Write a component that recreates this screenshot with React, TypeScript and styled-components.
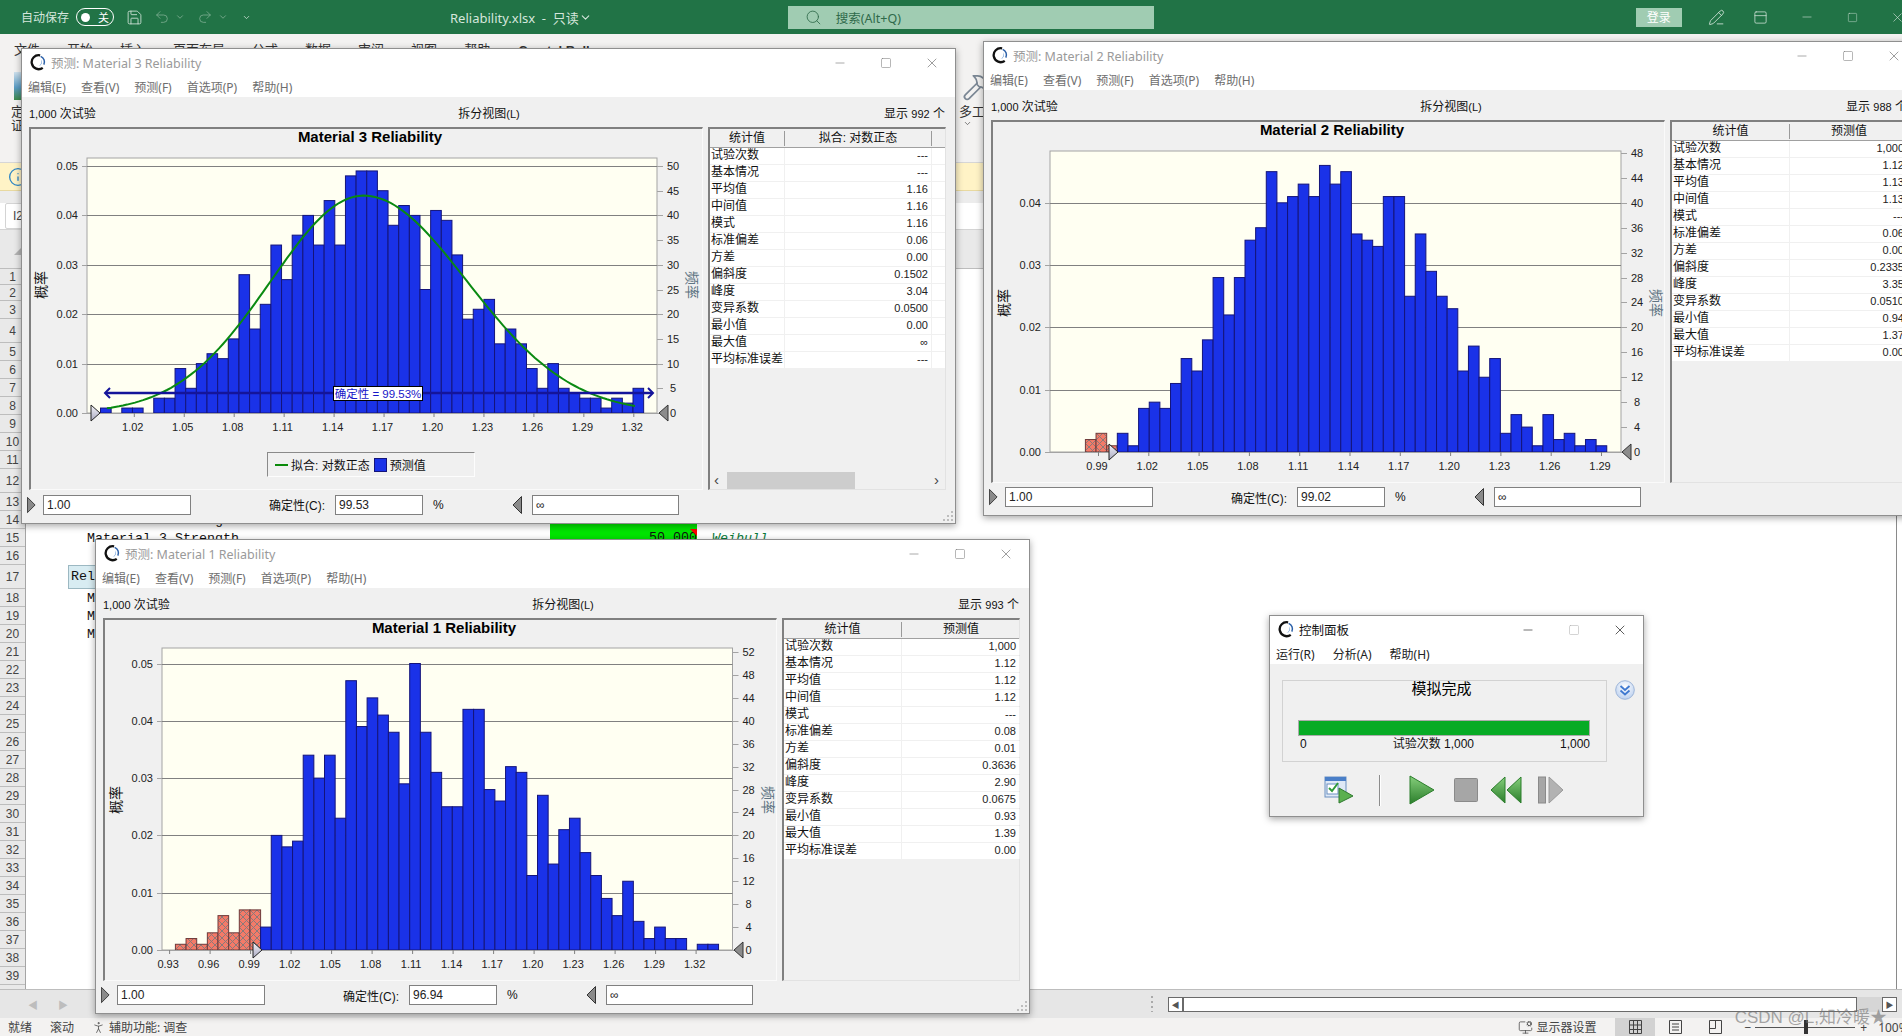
import React from 'react';
import styled, { createGlobalStyle } from 'styled-components';
import { Save, Undo2, Redo2, Search, ChevronDown, PencilLine, PanelTop, Minus, Square, X, Hammer, PersonStanding, MonitorCog, Info } from 'lucide-react';

const UI = '"Liberation Sans", "Noto Sans CJK SC", sans-serif';
const TITLE = '"Noto Sans", "Noto Sans CJK SC", sans-serif';
const MONO = '"Liberation Mono", monospace';

const Global = createGlobalStyle`
  html, body { margin: 0; padding: 0; background: #fff; overflow: hidden; }
  body { font-family: ${UI}; font-size: 12px; color: #111; }
  * { box-sizing: border-box; }
`;

const Page = styled.div`
  position: relative; width: 1902px; height: 1036px; overflow: hidden;
  display: flex; flex-direction: column; background: #fff;
`;

/* ---------- Excel shell ---------- */
const ExcelTitle = styled.header`
  height: 34px; background: #217346; display: flex; align-items: center; flex: none;
  color: #cfe3d7; font-family: ${TITLE}; font-size: 12px; overflow: hidden;
`;
const TitleItem = styled.span<{ $ml: number; $dim?: boolean }>`
  margin-left: ${p => p.$ml}px; display: inline-flex; align-items: center; flex: none;
  color: ${p => (p.$dim ? '#7fae93' : '#d5e6dc')};
`;
const DocName = styled(TitleItem)`
  font-size: 13px;
`;
const Toggle = styled.span`
  margin-left: 7px; width: 38px; height: 18px; border: 1.5px solid #fff; border-radius: 9px; flex: none;
  display: flex; align-items: center; justify-content: space-between; padding: 0 4px 0 4px;
  color: #fff; font-size: 11px;
  &::before { content: ''; width: 9px; height: 9px; border-radius: 50%; background: #fff; }
`;
const SearchBox = styled.div`
  margin-left: 196px; width: 366px; height: 23px; background: #a0ccb2; flex: none;
  display: flex; align-items: center; padding-left: 17px; gap: 14px; color: #2f6a4a; font-size: 12.5px;
`;
const Login = styled.div`
  margin-left: 482px; width: 46px; height: 19px; background: #a0ccb2; color: #fff; flex: none;
  display: flex; align-items: center; justify-content: center; font-size: 12px;
`;

const Ribbon = styled.section`
  height: 129px; flex: none; background: #f3f2f1; border-bottom: 1px solid #d6d6d6;
  display: flex; flex-direction: column; overflow: hidden;
`;
const TabRow = styled.nav`
  height: 24px; display: flex; align-items: flex-end; padding-left: 14px; gap: 27px;
  font-family: ${TITLE}; font-size: 13px; color: #333;
`;
const TabBold = styled.b`
  font-family: ${UI}; font-size: 13px; margin-left: 1px;
`;
const RibbonBody = styled.div`
  display: grid; grid-template-columns: 948px 1fr; padding: 14px 0 0 11px; flex: 1;
`;
const RibbonTool = styled.div`
  display: flex; flex-direction: column; align-items: flex-start; font-size: 13px; line-height: 14px; color: #333;
`;
const ToolArt = styled.div<{ $paint?: boolean }>`
  width: 30px; height: 28px; margin-left: 3px; margin-bottom: 5px; color: #7b8794;
  background: ${p => (p.$paint ? 'linear-gradient(to bottom, #cfe2ee 0%, #5b9cc4 55%, #3d8a4a 100%)' : 'transparent')};
`;
const ToolChev = styled.div`
  margin-left: 4px; color: #555; line-height: 10px;
`;
const YellowBar = styled.div`
  height: 28px; flex: none; background: #fff3c6; padding: 4px 0 0 8px; color: #2f86c5;
  border-bottom: 1px solid #e8d9a0;
`;
const BandGap = styled.div`
  height: 12px; flex: none; background: #ececec;
`;
const FormulaBar = styled.div`
  height: 27px; flex: none; background: #fff; border-bottom: 1px solid #d4d4d4; padding-left: 5px;
`;
const NameBox = styled.div`
  width: 80px; height: 26px; background: #fff; border: 1px solid #d4d4d4; border-radius: 2px;
  padding: 5px 0 0 7px; color: #444;
`;
const ColHeader = styled.div`
  height: 39px; flex: none; background: #e9e9e9; border-bottom: 1px solid #bdbdbd; padding: 16px 0 0 14px;
`;
const Corner = styled.div`
  width: 0; height: 0; border-left: 9px solid transparent; border-bottom: 9px solid #b4b4b4;
`;

const Sheet = styled.main`
  flex: 1; min-height: 0; display: flex; overflow: hidden; background: #fff; border-bottom: 1px solid #bdbdbd;
`;
const RowHeads = styled.div`
  width: 26px; flex: none; background: #e9e9e9; border-right: 1px solid #a5a5a5;
`;
const RowHead = styled.div<{ $h: number }>`
  height: ${p => p.$h}px; border-bottom: 1px solid #bdbdbd; color: #444; font-size: 12px;
  display: flex; align-items: center; justify-content: center;
`;
const SheetCells = styled.div`
  flex: 1; min-width: 0; border-right: 1px solid #8a8a8a; margin-right: 5px;
  font-family: ${MONO}; font-size: 13.33px;
`;
const SheetRow = styled.div<{ $h: number }>`
  height: ${p => p.$h}px; display: grid; grid-template-columns: 42px 19px 463px 147px 1fr; align-items: center;
`;
const NameCell = styled.div`
  grid-column: 3; white-space: nowrap;
`;
const GreenCell = styled.div`
  grid-column: 4; background: #00e600; height: 100%; text-align: right; position: relative; padding-top: 1px;
  &::after { content: ''; position: absolute; top: 0; right: 0; border-top: 7px solid #f00; border-left: 7px solid transparent; }
`;
const DistCell = styled.div`
  grid-column: 5; padding-left: 15px; color: #0a7a3a; font-style: italic;
`;
const SectionCell = styled.div`
  grid-column: 2 / 4; width: 110px; height: 24px; background: #d8ecf2; border: 1px solid #9cb8c2;
  padding: 3px 0 0 2px; white-space: nowrap;
`;

const ScrollRow = styled.div`
  height: 28px; flex: none; background: #e6e6e6; display: flex; align-items: center; color: #bdbdbd; font-size: 10px;
`;
const SheetArrow = styled.span<{ $ml: number }>`
  margin-left: ${p => p.$ml}px; flex: none;
`;
const Grip = styled.span`
  margin-left: 1083px; width: 2px; height: 16px; flex: none;
  background: repeating-linear-gradient(to bottom, #aaa 0 2px, transparent 2px 5px);
`;
const HScroll = styled.div`
  margin-left: 15px; width: 729px; height: 15px; flex: none; display: flex; background: #d6d6d6; color: #555;
`;
const HBtn = styled.div`
  width: 15px; background: #fff; border: 1px solid #6a6a6a; display: flex; align-items: center; justify-content: center;
  font-size: 8px; color: #555; flex: none;
`;
const HTrack = styled.div`
  width: 674px; background: #fff; border: 1px solid #6a6a6a; border-left-width: 1px; flex: none;
`;
const HFill = styled.div`
  flex: 1;
`;

const StatusBar = styled.footer`
  height: 18px; flex: none; background: #f3f2f1; display: flex; align-items: center; font-family: ${TITLE};
  font-size: 12px; color: #444; overflow: hidden; white-space: nowrap;
`;
const StatusText = styled.span<{ $ml: number }>`
  margin-left: ${p => p.$ml}px; display: inline-flex; align-items: center; gap: 3px; flex: none;
`;
const ViewBtn = styled.span<{ $on?: boolean; $ml?: number }>`
  margin-left: ${p => p.$ml ?? 0}px; width: 40px; height: 18px; flex: none; display: flex; align-items: center; justify-content: center;
  background: ${p => (p.$on ? '#d2d2d2' : 'transparent')}; color: #444;
`;
const Zoomer = styled.span`
  position: relative; margin-left: 4px; width: 100px; height: 1px; background: #555; flex: none;
`;
const ZoomThumb = styled.span`
  position: absolute; left: 49px; top: -7px; width: 4px; height: 14px; background: #333;
`;
const Watermark = styled.div`
  position: absolute; right: 15px; bottom: 8px; font-family: ${UI}; font-size: 17px; color: rgba(110,110,110,.6);
  z-index: 9;
`;

/* ---------- Floating windows ---------- */
const Win = styled.section<{ $x: number; $y: number; $w: number; $h: number }>`
  position: absolute; left: ${p => p.$x}px; top: ${p => p.$y}px; width: ${p => p.$w}px; height: ${p => p.$h}px;
  background: #f0f0f0; border: 1px solid #8f8f8f; box-shadow: 0 2px 7px rgba(0,0,0,.35);
  display: flex; flex-direction: column; font-family: ${UI}; font-size: 12px; color: #111;
`;
const WinHead = styled.div`
  height: 48px; background: #fff; flex: none; display: flex; flex-direction: column;
`;
const WinTitleBar = styled.div<{ $active?: boolean }>`
  height: 26px; display: flex; align-items: center; padding-left: 7px; gap: 4px;
  font-family: ${TITLE}; font-size: 12.5px; color: ${p => (p.$active ? '#111' : '#9a9a9a')};
`;
const WinControls = styled.div<{ $active?: boolean }>`
  margin-left: auto; display: flex; color: ${p => (p.$active ? '#222' : '#7a7a7a')};
`;
const WinBtn = styled.span<{ $off?: boolean }>`
  width: 46px; height: 26px; padding-top: 2px; display: flex; align-items: center; justify-content: center;
  opacity: ${p => (p.$off ? 0.35 : 1)};
`;
const Menu = styled.div<{ $active?: boolean; $gap: number }>`
  height: 22px; padding: 2px 0 0 6px; display: flex; align-items: center; gap: ${p => p.$gap}px;
  font-family: ${TITLE}; font-size: 12px; color: ${p => (p.$active ? '#222' : '#6e6e6e')};
`;
const InfoRow = styled.div`
  height: 30px; flex: none; display: grid; grid-template-columns: 1fr auto 1fr; align-items: center;
  padding: 0 10px 0 7px;
`;
const InfoCenter = styled.span`
  margin-left: 4px;
`;
const InfoRight = styled.span`
  justify-self: end;
`;
const Num = styled.span`
  font-size: 11px;
`;
const Body = styled.div`
  height: 363px; flex: none; display: flex; gap: 5px; padding-left: 7px;
`;
const ChartPanel = styled.div`
  width: 674px; height: 363px; flex: none; display: flex; flex-direction: column;
  border-top: 2px solid #808080; border-left: 2px solid #808080; border-right: 1px solid #fafafa; border-bottom: 1px solid #fafafa;
`;
const ChartTitle = styled.div`
  height: 22px; padding-left: 7px; flex: none; text-align: center; line-height: 16px; font-weight: 700; font-size: 15px; color: #000;
`;
const ChartSvg = styled.svg`
  display: block; flex: none; font-family: ${UI};
`;
const Legend = styled.div`
  margin-left: 236px; width: 208px; height: 25px; display: flex; align-items: center; flex: none;
  border: 1px solid #fdfdfd; border-top-color: #8a8a8a; border-left-color: #8a8a8a; padding-left: 7px;
`;
const LegendLine = styled.span`
  width: 13px; height: 2px; background: #0a8a0a; margin-right: 3px;
`;
const LegendSwatch = styled.span`
  width: 13px; height: 14px; background: #1a32e8; border: 1px solid #14147a; margin: 0 3px 0 4px;
`;

const StatsPanel = styled.div`
  width: 238px; flex: none; display: flex; flex-direction: column; height: 363px;
  border-top: 2px solid #808080; border-left: 2px solid #808080; border-right: 1px solid #e2e2e2; border-bottom: 1px solid #e2e2e2;
`;
const StatsHead = styled.div<{ $c1: number; $c2: number }>`
  height: 19px; flex: none; display: grid; grid-template-columns: ${p => p.$c1}px ${p => p.$c2}px 1fr; align-items: center;
  border-bottom: 1px solid #a0a0a0; background: #f0f0f0;
`;
const StatsHeadCell = styled.div<{ $div?: boolean }>`
  text-align: center; height: 15px; line-height: 15px; border-right: ${p => (p.$div ? '1px solid #9a9a9a' : 'none')};
`;
const StatRow = styled.div<{ $c1: number; $c2: number }>`
  height: 17px; flex: none; display: grid; grid-template-columns: ${p => p.$c1}px ${p => p.$c2}px 1fr; background: #fff;
  border-bottom: 1px solid #f0f0f0; line-height: 15px;
`;
const StatName = styled.div`
  padding-left: 1px; border-right: 1px solid #f0f0f0; white-space: nowrap; overflow: hidden;
`;
const StatValue = styled.div`
  text-align: right; padding-right: 3px; font-size: 11px; color: #222; border-right: 1px solid #f0f0f0;
`;
const StatSpacer = styled.div`
  flex: 1;
`;
const StatScroll = styled.div`
  height: 17px; flex: none; display: flex; align-items: center; background: #f0f0f0; color: #444; font-size: 15px; padding: 0 6px 2px 4px;
`;
const StatThumb = styled.div`
  margin: 2px 0 0 8px; width: 128px; height: 17px; background: #cdcdcd;
`;
const ArrowEnd = styled.span`
  margin-left: auto;
`;

const BottomRow = styled.div`
  flex: 1; display: flex; align-items: center; padding: 0 0 4px 5px; position: relative;
`;
const ValueBox = styled.div<{ $ml: number; $w: number }>`
  margin-left: ${p => p.$ml}px; width: ${p => p.$w}px; height: 20px; flex: none; background: #fff;
  border: 1px solid #808080; padding: 0 3px; line-height: 18px; color: #222;
`;
const FieldLabel = styled.span<{ $ml: number; $w: number }>`
  margin-left: ${p => p.$ml}px; width: ${p => p.$w}px; flex: none; white-space: nowrap;
`;
const GripCorner = styled.svg`
  position: absolute; right: 2px; bottom: 2px;
`;
const TriWrap = styled.svg<{ $ml?: number }>`
  margin-left: ${p => p.$ml ?? 0}px; flex: none; display: block;
`;

/* control panel */
const CpBody = styled.div`
  flex: 1; display: flex; flex-direction: column; padding: 16px 0 0 12px;
`;
const CpTop = styled.div`
  display: flex; align-items: flex-start;
`;
const CpGroup = styled.div`
  width: 325px; height: 82px; border: 1px solid #d2d2d2; padding: 0 16px 0 15px;
`;
const CpStatus = styled.div`
  text-align: center; font-size: 15px; line-height: 14px; height: 39px; color: #000; padding-right: 5px;
  font-family: "Noto Sans CJK SC", sans-serif;
`;
const Progress = styled.div`
  height: 16px; background: #07ab25; border: 1px solid #ababab;
`;
const ProgressLabels = styled.div`
  display: flex; justify-content: space-between; line-height: 14px; margin-top: 1px; padding: 0 0 0 2px;
`;
const CpChevron = styled.svg`
  margin: 0 0 0 8px; flex: none;
`;
const CpToolbar = styled.div`
  display: flex; align-items: center; height: 34px; margin-top: 11px;
`;
const CpIcon = styled.svg<{ $ml: number }>`
  margin-left: ${p => p.$ml}px; flex: none; display: block;
`;
const CpDivider = styled.span<{ $ml: number }>`
  margin-left: ${p => p.$ml}px; width: 2px; height: 31px; background: #8c8c8c; border-right: 1px solid #fff; flex: none;
`;

/* ---------- pieces ---------- */
const Logo = () => (
  <svg width="18" height="18" viewBox="0 0 17 17" style={{ flex: 'none' }}>
    <path d="M10.5 2.2A6.6 6.6 0 1 0 13 14" fill="none" stroke="#111" strokeWidth="2.2" />
    <path d="M11 3.2A5.7 5.7 0 0 1 14 11" fill="none" stroke="#2a5fa8" strokeWidth="1.4" />
    <path d="M11.5 6a4 4 0 0 1-2.5 6.3A5 5 0 0 0 11.5 6z" fill="#5a8fd0" />
  </svg>
);

const Controls = ({ active, off }: { active?: boolean; off?: boolean }) => (
  <WinControls $active={active}>
    <WinBtn><Minus size={14} strokeWidth={1.1} /></WinBtn>
    <WinBtn $off={off}><Square size={12} strokeWidth={1.1} /></WinBtn>
    <WinBtn><X size={16} strokeWidth={1.1} /></WinBtn>
  </WinControls>
);

type ChartCfg = {
  x0: number; x1: number; top: number; bottom: number; per: number;
  barStart: number; barW: number; counts: number[]; red: number;
  tick0: number; tickStep: number; xLabels: string[];
  leftMax: number; rightMax: number; rightStep: number;
  leftMarker: number; rightMarker: number; height: number;
  curve?: boolean; certainty?: string; yTitle: number;
};

const VB_X = 9, VB_Y = 103, VB_W = 671;

function lognCurve(c: ChartCfg) {
  const pts: string[] = [];
  for (let x = c.x0 + 20; x <= 616; x += 4) {
    const center = 341.4;
    const s = x < center ? 92.7 : 103.6;
    const v = Math.exp(-((x - center) ** 2) / (2 * s * s)) * 44 * c.per;
    pts.push(`${x},${(c.bottom - v).toFixed(1)}`);
  }
  return pts.join(' ');
}

const Chart = ({ id, c }: { id: string; c: ChartCfg }) => {
  const left: number[] = [];
  for (let i = 0; i <= c.leftMax; i++) left.push(i);
  const right: number[] = [];
  for (let i = 0; i <= c.rightMax; i += c.rightStep) right.push(i);
  const ly = (n: number) => c.bottom - n * 10 * c.per;
  return (
    <ChartSvg width={VB_W} height={c.height} viewBox={`${VB_X} ${VB_Y} ${VB_W} ${c.height}`}>
      <defs>
        <pattern id={`hatch-${id}`} width="7" height="7" patternUnits="userSpaceOnUse">
          <rect width="7" height="7" fill="#f47a68" />
          <path d="M0 0L7 7M7 0L0 7" stroke="#8a7a7a" strokeWidth="1" />
        </pattern>
        <linearGradient id={`mark-${id}`} x1="0" y1="0" x2="0" y2="1">
          <stop offset="0" stopColor="#f4f4fa" />
          <stop offset="1" stopColor="#a8a8c0" />
        </linearGradient>
      </defs>
      <rect x={c.x0} y={c.top} width={c.x1 - c.x0} height={c.bottom - c.top} fill="#fffff2" stroke="#a3a3a3" />
      {left.map(n => (
        <g key={n}>
          {n > 0 && <line x1={c.x0} x2={c.x1} y1={Math.round(ly(n)) + 0.5} y2={Math.round(ly(n)) + 0.5} stroke="#808080" />}
          <line x1={c.x0 - 5} x2={c.x0} y1={Math.round(ly(n)) + 0.5} y2={Math.round(ly(n)) + 0.5} stroke="#a3a3a3" />
          <text x={c.x0 - 9} y={ly(n) + 4} textAnchor="end" fontSize="11" fill="#222">{`0.0${n}`}</text>
        </g>
      ))}
      {right.map(n => {
        const y = c.bottom - n * c.per;
        return (
          <g key={n}>
            <line x1={c.x1} x2={c.x1 + 6} y1={Math.round(y) + 0.5} y2={Math.round(y) + 0.5} stroke="#a3a3a3" />
            <text x={c.x1 + 16} y={y + 4} textAnchor="middle" fontSize="11" fill="#222">{n}</text>
          </g>
        );
      })}
      {c.counts.map((n, i) =>
        n === 0 ? null : (
          <rect
            key={i}
            x={c.barStart + i * c.barW}
            y={c.bottom - n * c.per}
            width={c.barW}
            height={n * c.per}
            fill={i < c.red ? `url(#hatch-${id})` : '#1a32e8'}
            stroke={i < c.red ? '#6e3a3a' : '#14147a'}
            strokeWidth="1"
          />
        )
      )}
      <line x1={c.x0} x2={c.x1} y1={c.bottom + 0.5} y2={c.bottom + 0.5} stroke="#a3a3a3" />
      {c.xLabels.map((l, i) => {
        const x = c.tick0 + i * c.tickStep;
        return (
          <g key={l}>
            <line x1={x} x2={x} y1={c.bottom} y2={c.bottom + 4} stroke="#808080" />
            <text x={x - 1.5} y={c.bottom + 18} textAnchor="middle" fontSize="11" fill="#222">{l}</text>
          </g>
        );
      })}
      {c.curve && <polyline points={lognCurve(c)} fill="none" stroke="#0a8a12" strokeWidth="2" />}
      {c.certainty && (
        <g>
          <line x1={84} x2={630} y1={345} y2={345} stroke="#14149a" strokeWidth="2.5" />
          <path d="M88 340L83 345L88 350M626 340L631 345L626 350" fill="none" stroke="#14149a" strokeWidth="2" />
          <rect x={311.5} y={338.5} width={89} height={14} fill="#fff" stroke="#000" />
          <text x={356} y={350} textAnchor="middle" fontSize="11.5" fill="#1616c8">{c.certainty}</text>
        </g>
      )}
      <polygon
        points={`${c.leftMarker},${c.bottom - 8} ${c.leftMarker + 9},${c.bottom} ${c.leftMarker},${c.bottom + 8}`}
        fill={`url(#mark-${id})`}
        stroke="#222"
      />
      <polygon
        points={`${c.rightMarker + 9},${c.bottom - 8} ${c.rightMarker},${c.bottom} ${c.rightMarker + 9},${c.bottom + 8}`}
        fill="#8c8c8c"
        stroke="#333"
      />
      <text transform={`translate(${c.x0 - 41},${c.yTitle}) rotate(-90)`} textAnchor="middle" fontSize="14" fill="#111">概率</text>
      <text transform={`translate(${c.x1 + 30},${c.yTitle}) rotate(90)`} textAnchor="middle" fontSize="14" fill="#5f7583">频率</text>
    </ChartSvg>
  );
};

const Tri = ({ dir, ml }: { dir: 'r' | 'l'; ml?: number }) => (
  <TriWrap $ml={ml} width={dir === 'r' ? 9 : 10} height={18} viewBox="0 0 10 18">
    <polygon points={dir === 'r' ? '0.5,0.5 9,9 0.5,17.5' : '9.5,0.5 1,9 9.5,17.5'} fill="#8a8a8a" stroke="#333" />
  </TriWrap>
);

type StatProps = { c1: number; c2: number; head2: string; values: string[]; scroll?: boolean };
const STAT_NAMES = ['试验次数', '基本情况', '平均值', '中间值', '模式', '标准偏差', '方差', '偏斜度', '峰度', '变异系数', '最小值', '最大值', '平均标准误差'];

const Stats = ({ c1, c2, head2, values, scroll }: StatProps) => (
  <StatsPanel>
    <StatsHead $c1={c1} $c2={c2}>
      <StatsHeadCell $div>统计值</StatsHeadCell>
      <StatsHeadCell $div={c2 > 120}>{head2}</StatsHeadCell>
      <span />
    </StatsHead>
    {STAT_NAMES.map((n, i) => (
      <StatRow key={n} $c1={c1} $c2={c2}>
        <StatName>{n}</StatName>
        <StatValue>{values[i]}</StatValue>
        <span />
      </StatRow>
    ))}
    <StatSpacer />
    {scroll && (
      <StatScroll>
        <span>‹</span>
        <StatThumb />
        <ArrowEnd>›</ArrowEnd>
      </StatScroll>
    )}
  </StatsPanel>
);

const Forecast = ({
  id, x, y, h, name, shown, cert, chart, stats,
}: {
  id: string; x: number; y: number; h: number; name: string; shown: string; cert: string; chart: ChartCfg; stats: StatProps;
}) => (
  <Win $x={x} $y={y} $w={935} $h={h}>
    <WinHead>
      <WinTitleBar>
        <Logo />
        <span>预测: {name}</span>
        <Controls />
      </WinTitleBar>
      <Menu $gap={15}>
        <span>编辑(E)</span><span>查看(V)</span><span>预测(F)</span><span>首选项(P)</span><span>帮助(H)</span>
      </Menu>
    </WinHead>
    <InfoRow>
      <span><Num>1,000</Num> 次试验</span>
      <InfoCenter>拆分视图<Num>(L)</Num></InfoCenter>
      <InfoRight>显示 <Num>{shown}</Num> 个</InfoRight>
    </InfoRow>
    <Body>
      <ChartPanel>
        <ChartTitle>{name}</ChartTitle>
        <Chart id={id} c={chart} />
        {chart.curve && (
          <Legend>
            <LegendLine /><span>拟合: 对数正态</span>
            <LegendSwatch /><span>预测值</span>
          </Legend>
        )}
      </ChartPanel>
      <Stats {...stats} />
    </Body>
    <BottomRow>
      <Tri dir="r" />
      <ValueBox $ml={7} $w={148}>1.00</ValueBox>
      <FieldLabel $ml={78} $w={57}>确定性(C):</FieldLabel>
      <ValueBox $ml={9} $w={88}>{cert}</ValueBox>
      <FieldLabel $ml={10} $w={8}>%</FieldLabel>
      <Tri dir="l" ml={71} />
      <ValueBox $ml={10} $w={147}>∞</ValueBox>
      <GripCorner width="11" height="11" viewBox="0 0 11 11">
        {[[9, 1], [9, 5], [9, 9], [5, 5], [5, 9], [1, 9]].map(([a, b]) => (
          <rect key={`${a}-${b}`} x={a} y={b} width="2" height="2" fill="#bdbdbd" />
        ))}
      </GripCorner>
    </BottomRow>
  </Win>
);

const c3: ChartCfg = {
  x0: 65, x1: 635, top: 110, bottom: 365, per: 4.94, barStart: 78.5, barW: 10.65,
  counts: [1,0,1,1,0,3,3,9,5,10,12,11,15,28,17,22,34,27,36,40,34,43,34,48,49,49,45,38,42,40,25,41,39,32,19,21,23,14,17,14,9,5,10,5,4,3,3,1,3,2,5],
  red: 0, tick0: 112.3, tickStep: 49.95,
  xLabels: ['1.02','1.05','1.08','1.11','1.14','1.17','1.20','1.23','1.26','1.29','1.32'],
  leftMax: 5, rightMax: 50, rightStep: 5, leftMarker: 69, rightMarker: 637, height: 301,
  curve: true, certainty: '确定性 = 99.53%', yTitle: 237,
};
const c2: ChartCfg = {
  x0: 66, x1: 637, top: 110, bottom: 411, per: 6.23, barStart: 101.4, barW: 10.64,
  counts: [2,3,1,3,1,7,8,7,11,15,13,18,28,22,28,34,36,45,40,41,43,41,46,43,45,35,34,33,41,41,25,35,29,25,23,13,17,12,15,3,6,4,1,6,2,3,1,2,1],
  red: 3, tick0: 114.5, tickStep: 50.3,
  xLabels: ['0.99','1.02','1.05','1.08','1.11','1.14','1.17','1.20','1.23','1.26','1.29'],
  leftMax: 4, rightMax: 48, rightStep: 4, leftMarker: 125, rightMarker: 638, height: 338, yTitle: 262,
};
const c1: ChartCfg = {
  x0: 66, x1: 636.5, top: 109, bottom: 411, per: 5.73, barStart: 79.4, barW: 10.65,
  counts: [1,2,1,3,6,3,7,7,4,20,18,19,34,30,34,23,47,39,44,41,38,29,50,38,31,25,25,42,42,28,26,32,31,13,27,15,21,23,17,13,9,6,12,5,2,4,2,2,0,1,1],
  red: 8, tick0: 73.6, tickStep: 40.5,
  xLabels: ['0.93','0.96','0.99','1.02','1.05','1.08','1.11','1.14','1.17','1.20','1.23','1.26','1.29','1.32'],
  leftMax: 5, rightMax: 52, rightStep: 4, leftMarker: 157, rightMarker: 638, height: 338, yTitle: 261,
};

const ROW_H = [16,16,18,24,18,18,18,18,18,18,18,24,18,18,18,18,24,18,18,18,...Array(20).fill(18)];

const CONTENT: Record<number, React.ReactNode> = {
  14: <><NameCell>Material 2 Strength</NameCell><GreenCell>50.000</GreenCell><DistCell>Weibull</DistCell></>,
  15: <><NameCell>Material 3 Strength</NameCell><GreenCell>50.000</GreenCell><DistCell>Weibull</DistCell></>,
  17: <SectionCell>Reliability</SectionCell>,
  18: <NameCell>Material 1 Reliability</NameCell>,
  19: <NameCell>Material 2 Reliability</NameCell>,
  20: <NameCell>Material 3 Reliability</NameCell>,
};

export default function App() {
  return (
    <Page>
      <Global />
      <ExcelTitle>
        <TitleItem $ml={21}>自动保存</TitleItem>
        <Toggle>关</Toggle>
        <TitleItem $ml={12}><Save size={17} strokeWidth={1.2} /></TitleItem>
        <TitleItem $ml={11} $dim><Undo2 size={16} strokeWidth={1.2} /></TitleItem>
        <TitleItem $ml={5} $dim><ChevronDown size={10} /></TitleItem>
        <TitleItem $ml={12} $dim><Redo2 size={16} strokeWidth={1.2} /></TitleItem>
        <TitleItem $ml={5} $dim><ChevronDown size={10} /></TitleItem>
        <TitleItem $ml={14}><ChevronDown size={9} /></TitleItem>
        <DocName $ml={199}>Reliability.xlsx&nbsp; - &nbsp;只读 <ChevronDown size={13} /></DocName>
        <SearchBox><Search size={17} strokeWidth={1.2} /><span>搜索(Alt+Q)</span></SearchBox>
        <Login>登录</Login>
        <TitleItem $ml={26}><PencilLine size={17} strokeWidth={1.2} /></TitleItem>
        <TitleItem $ml={28}><PanelTop size={15} strokeWidth={1.2} /></TitleItem>
        <TitleItem $ml={32}><Minus size={14} strokeWidth={1} /></TitleItem>
        <TitleItem $ml={33}><Square size={11} strokeWidth={1} /></TitleItem>
        <TitleItem $ml={32}><X size={15} strokeWidth={1} /></TitleItem>
      </ExcelTitle>

      <Ribbon>
        <TabRow>
          <span>文件</span><span>开始</span><span>插入</span><span>页面布局</span><span>公式</span><span>数据</span>
          <span>审阅</span><span>视图</span><span>帮助</span><TabBold>Crystal Ball</TabBold>
        </TabRow>
        <RibbonBody>
          <RibbonTool>
            <ToolArt $paint />
            <span>定</span>
            <span>证</span>
          </RibbonTool>
          <RibbonTool>
            <ToolArt><Hammer size={30} strokeWidth={1.4} /></ToolArt>
            <span>多工</span>
            <ToolChev><ChevronDown size={9} /></ToolChev>
          </RibbonTool>
        </RibbonBody>
      </Ribbon>
      <YellowBar><Info size={20} strokeWidth={1.6} /></YellowBar>
      <BandGap />
      <FormulaBar><NameBox>I2</NameBox></FormulaBar>
      <ColHeader><Corner /></ColHeader>
      <Sheet>
        <RowHeads>
          {ROW_H.map((h, i) => <RowHead key={i} $h={h}>{i + 1}</RowHead>)}
        </RowHeads>
        <SheetCells>
          {ROW_H.map((h, i) => <SheetRow key={i} $h={h}>{CONTENT[i + 1]}</SheetRow>)}
        </SheetCells>
      </Sheet>
      <ScrollRow>
        <SheetArrow $ml={28}>◀</SheetArrow>
        <SheetArrow $ml={20}>▶</SheetArrow>
        <Grip />
        <HScroll>
          <HBtn>◀</HBtn>
          <HTrack />
          <HFill />
          <HBtn>▶</HBtn>
        </HScroll>
      </ScrollRow>
      <StatusBar>
        <StatusText $ml={8}>就绪</StatusText>
        <StatusText $ml={18}>滚动</StatusText>
        <StatusText $ml={17}><PersonStanding size={15} strokeWidth={1.2} />辅助功能: 调查</StatusText>
        <StatusText $ml={1331}><MonitorCog size={15} strokeWidth={1.2} />显示器设置</StatusText>
        <ViewBtn $on $ml={19}>
          <svg width="13" height="14" viewBox="0 0 13 14"><path d="M.5.5h12v13H.5zM.5 5h12M.5 9.500h12M4.500.5v13M8.500.5v13" fill="none" stroke="#444" /></svg>
        </ViewBtn>
        <ViewBtn>
          <svg width="13" height="14" viewBox="0 0 13 14"><path d="M.5.5h12v13H.5zM3 4h7M3 7h7M3 10h7" fill="none" stroke="#444" /></svg>
        </ViewBtn>
        <ViewBtn>
          <svg width="13" height="14" viewBox="0 0 13 14"><path d="M.5.5h12v13H.5zM.5 8.500h6V.5" fill="none" stroke="#444" /></svg>
        </ViewBtn>
        <StatusText $ml={9}>−</StatusText>
        <Zoomer><ZoomThumb /></Zoomer>
        <StatusText $ml={5}>+</StatusText>
        <StatusText $ml={11}>100%</StatusText>
      </StatusBar>
      <Watermark>CSDN @L,知冷暖★</Watermark>

      <Forecast
        id="m3" x={21} y={48} h={476} name="Material 3 Reliability" shown="992" cert="99.53" chart={c3}
        stats={{ c1: 75, c2: 147, head2: '拟合: 对数正态', scroll: true, values: ['---','---','1.16','1.16','1.16','0.06','0.00','0.1502','3.04','0.0500','0.00','∞','---'] }}
      />
      <Forecast
        id="m2" x={983} y={41} h={475} name="Material 2 Reliability" shown="988" cert="99.02" chart={c2}
        stats={{ c1: 118, c2: 118, head2: '预测值', values: ['1,000','1.12','1.13','1.13','---','0.06','0.00','0.2335','3.35','0.0510','0.94','1.37','0.00'] }}
      />
      <Forecast
        id="m1" x={95} y={539} h={475} name="Material 1 Reliability" shown="993" cert="96.94" chart={c1}
        stats={{ c1: 118, c2: 118, head2: '预测值', values: ['1,000','1.12','1.12','1.12','---','0.08','0.01','0.3636','2.90','0.0675','0.93','1.39','0.00'] }}
      />

      <Win $x={1269} $y={615} $w={375} $h={202}>
        <WinHead>
          <WinTitleBar $active>
            <Logo />
            <span>控制面板</span>
            <Controls active off />
          </WinTitleBar>
          <Menu $active $gap={18}>
            <span>运行(R)</span><span>分析(A)</span><span>帮助(H)</span>
          </Menu>
        </WinHead>
        <CpBody>
          <CpTop>
            <CpGroup>
              <CpStatus>模拟完成</CpStatus>
              <Progress />
              <ProgressLabels>
                <span>0</span>
                <span>试验次数 1,000</span>
                <span>1,000</span>
              </ProgressLabels>
            </CpGroup>
            <CpChevron width="20" height="20" viewBox="0 0 20 20">
              <defs>
                <radialGradient id="chev" cx=".5" cy=".35" r=".7">
                  <stop offset="0" stopColor="#ffffff" />
                  <stop offset="1" stopColor="#b7cdee" />
                </radialGradient>
              </defs>
              <circle cx="10" cy="10" r="9.300" fill="url(#chev)" stroke="#9db5d8" />
              <path d="M5.500 6l4.500 4 4.500-4M5.500 10.500l4.500 4 4.500-4" fill="none" stroke="#3f79d0" strokeWidth="1.800" />
            </CpChevron>
          </CpTop>
          <CpToolbar>
            <CpIcon $ml={42} width="30" height="30" viewBox="0 0 30 30">
              <rect x="1" y="2" width="21" height="20" fill="#dfe9f6" stroke="#6a8fc0" />
              <rect x="1" y="2" width="21" height="4" fill="#4a7fc8" />
              <rect x="3" y="9" width="11" height="10" fill="#fff" stroke="#6a8fc0" />
              <path d="M5 13l3 3 6-8" fill="none" stroke="#2f9a3a" strokeWidth="2" />
              <polygon points="15,13 29,21 15,28" fill="#5bb04f" stroke="#2f7a2f" />
            </CpIcon>
            <CpDivider $ml={25} />
            <CpIcon $ml={28} width="26" height="30" viewBox="0 0 26 30">
              <defs>
                <linearGradient id="gp" x1="0" y1="0" x2="0" y2="1">
                  <stop offset="0" stopColor="#86cf7c" />
                  <stop offset="1" stopColor="#2b7e2b" />
                </linearGradient>
              </defs>
              <polygon points="1,1 25,15 1,29" fill="url(#gp)" stroke="#2b7e2b" />
            </CpIcon>
            <CpIcon $ml={19} width="24" height="24" viewBox="0 0 24 24">
              <rect x=".5" y=".5" width="23" height="23" rx="1" fill="#a6a6a6" stroke="#8a8a8a" />
            </CpIcon>
            <CpIcon $ml={12} width="32" height="28" viewBox="0 0 32 28">
              <polygon points="15,1 1,14 15,27" fill="url(#gp)" stroke="#2b7e2b" />
              <polygon points="31,1 17,14 31,27" fill="url(#gp)" stroke="#2b7e2b" />
            </CpIcon>
            <CpIcon $ml={16} width="26" height="28" viewBox="0 0 26 28">
              <rect x=".5" y="1" width="7" height="26" fill="#a6a6a6" stroke="#8a8a8a" />
              <polygon points="11,1 25,14 11,27" fill="#b2b2b2" stroke="#9a9a9a" />
            </CpIcon>
          </CpToolbar>
        </CpBody>
      </Win>
    </Page>
  );
}
